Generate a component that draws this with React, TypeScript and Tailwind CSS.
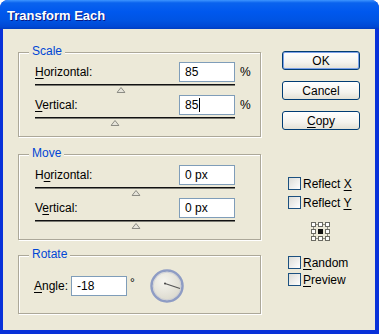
import React from "react";

type Param = {
  label: string;
  u: number;
  value: string;
  unit?: string;
  thumb: number;
  cursor?: boolean;
};

const scaleParams: Param[] = [
  { label: "Horizontal:", u: 0, value: "85", unit: "%", thumb: 43 },
  { label: "Vertical:", u: 0, value: "85", unit: "%", thumb: 40, cursor: true },
];

const moveParams: Param[] = [
  { label: "Horizontal:", u: 1, value: "0 px", thumb: 50.5 },
  { label: "Vertical:", u: 1, value: "0 px", thumb: 50.5 },
];

// underline the access-key letter
function Mn({ text, u }: { text: string; u: number }) {
  return (
    <span>
      {text.slice(0, u)}
      <span className="underline underline-offset-2">{text[u]}</span>
      {text.slice(u + 1)}
    </span>
  );
}

function GroupBox({
  title,
  className,
  children,
}: {
  title: string;
  className: string;
  children: React.ReactNode;
}) {
  return (
    <div
      className={`relative border border-[#aca899] shadow-[inset_1px_1px_0_#fff,1px_1px_0_#fff] ${className}`}
    >
      <span className="absolute left-[10px] top-[-9px] bg-[#ece9d8] px-[3px] text-[12px] leading-[14px] text-[#0046d5]">
        {title}
      </span>
      {children}
    </div>
  );
}

function TextBox({ value, cursor }: { value: string; cursor?: boolean }) {
  return (
    <div className="flex h-[20px] w-[56px] items-center border border-[#7f9db9] bg-white pl-[5px] text-[12px] leading-none text-black">
      {value}
      {cursor && <span className="ml-px h-[14px] w-px bg-black" />}
    </div>
  );
}

function Thumb() {
  return (
    <svg width="9" height="6" viewBox="0 0 9 6">
      <polygon
        points="4.5,0.5 8.5,5.5 0.5,5.5"
        fill="#e6e4da"
        stroke="#8c8c84"
        strokeWidth="1"
      />
    </svg>
  );
}

function SliderParam({ p }: { p: Param }) {
  return (
    <div className="h-[33px]">
      <div className="flex h-[20px] items-center">
        <div className="flex w-[200px] items-center justify-between">
          <Mn text={p.label} u={p.u} />
          <TextBox value={p.value} cursor={p.cursor} />
        </div>
        {p.unit && <span className="ml-[5px]">{p.unit}</span>}
      </div>
      <div className="relative mt-[2px] h-[2px] w-[200px] border-t border-t-[#111] border-b border-b-[#7a7a72]">
        <div
          className="absolute top-[2px] -translate-x-1/2"
          style={{ left: `${p.thumb}%` }}
        >
          <Thumb />
        </div>
      </div>
    </div>
  );
}

function Button({
  children,
  primary,
}: {
  children: React.ReactNode;
  primary?: boolean;
}) {
  return (
    <button
      className={`flex h-[19px] w-[78px] items-center justify-center rounded-[3px] border border-[#003c74] bg-[linear-gradient(180deg,#ffffff_0%,#f4f3ee_60%,#e3e1d6_100%)] text-[12px] leading-none text-black ${
        primary ? "shadow-[inset_0_0_0_1px_#7ea2e8]" : ""
      }`}
    >
      {children}
    </button>
  );
}

function Check({ text, u }: { text: string; u: number }) {
  return (
    <div className="flex h-[13px] items-center gap-[2px]">
      <span className="h-[13px] w-[13px] border border-[#1c5180] bg-[linear-gradient(135deg,#dcdcd7_0%,#ffffff_100%)]" />
      <Mn text={text} u={u} />
    </div>
  );
}

function RefPoint() {
  const p = [0.5, 7.5, 14.5];
  return (
    <svg width="19" height="19" viewBox="0 0 19 19">
      <rect x="2.5" y="2.5" width="14" height="14" fill="none" stroke="#8a8a80" />
      {p.map((y) =>
        p.map((x) => {
          const center = x === 7.5 && y === 7.5;
          return (
            <rect
              key={`${x}-${y}`}
              x={x}
              y={y}
              width="4"
              height="4"
              fill={center ? "#111" : "#fff"}
              stroke={center ? "#111" : "#6a6a62"}
            />
          );
        })
      )}
    </svg>
  );
}

function Dial() {
  return (
    <svg width="36" height="34" viewBox="0 0 36 34">
      <defs>
        <radialGradient id="dialFill" cx="40%" cy="35%" r="70%">
          <stop offset="0%" stopColor="#f6f5ef" />
          <stop offset="100%" stopColor="#d9d7cb" />
        </radialGradient>
      </defs>
      <circle cx="18" cy="17" r="15.5" fill="url(#dialFill)" stroke="#8e9cc4" strokeWidth="2.5" />
      <circle cx="18" cy="17" r="13.8" fill="none" stroke="#c9cbd6" strokeWidth="0.8" />
      <line x1="16" y1="14.5" x2="31" y2="19.5" stroke="#555" strokeWidth="1.2" />
      <circle cx="16" cy="14.5" r="1" fill="#444" />
    </svg>
  );
}

export default function App() {
  return (
    <div className="flex h-[334px] w-[379px] flex-col overflow-hidden rounded-t-[8px] bg-[#0831d9] font-['Liberation_Sans',Arial,sans-serif] text-[12px] text-black">
      <div className="flex h-[29px] shrink-0 items-center bg-[linear-gradient(180deg,#3d95ff_0%,#0a63ee_10%,#0058ee_40%,#0054e3_70%,#0048d4_92%,#003dc0_100%)] pl-[7px] pt-[2px]">
        <span className="text-[13px] font-bold text-white [text-shadow:1px_1px_0_#0a1883]">
          Transform Each
        </span>
      </div>

      <div className="ml-[3px] mr-[4px] flex h-[301px] bg-[#ece9d8] pl-[15px]">
        <div className="flex w-[243px] flex-col pt-[23px]">
          <GroupBox title="Scale" className="h-[85px] pl-[16px] pt-[9px]">
            {scaleParams.map((p) => (
              <SliderParam key={p.label} p={p} />
            ))}
          </GroupBox>

          <GroupBox title="Move" className="mt-[17px] h-[86px] pl-[16px] pt-[10px]">
            {moveParams.map((p) => (
              <SliderParam key={p.label} p={p} />
            ))}
          </GroupBox>

          <GroupBox title="Rotate" className="mt-[15px] h-[59px] pl-[15px] pt-[13px]">
            <div className="flex h-[34px] items-center">
              <span className="w-[37px]">
                <Mn text="Angle:" u={0} />
              </span>
              <TextBox value="-18" />
              <span className="w-[22px] self-start pl-[3px] pt-[8px] leading-none">°</span>
              <Dial />
            </div>
          </GroupBox>
        </div>

        <div className="ml-[21px] flex w-[78px] flex-col pt-[22px]">
          <div className="flex flex-col gap-[11px]">
            <Button primary>OK</Button>
            <Button>Cancel</Button>
            <Button>
              <Mn text="Copy" u={0} />
            </Button>
          </div>

          <div className="mt-[47px] flex flex-col gap-[6px] pl-[6px]">
            <Check text="Reflect X" u={8} />
            <Check text="Reflect Y" u={8} />
          </div>

          <div className="mt-[13px] pl-[29px]">
            <RefPoint />
          </div>

          <div className="mt-[15px] flex flex-col gap-[4px] pl-[6px]">
            <Check text="Random" u={0} />
            <Check text="Preview" u={0} />
          </div>
        </div>
      </div>
    </div>
  );
}
